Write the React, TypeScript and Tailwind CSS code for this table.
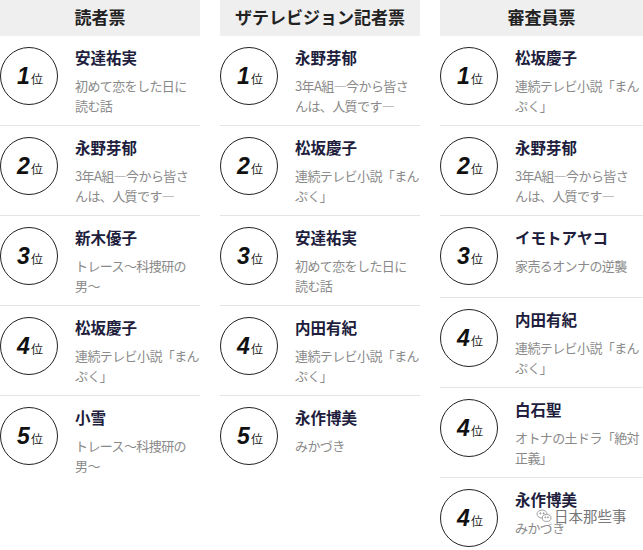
import React from "react";

type Entry = {
  rank: number;
  name: string;
  lines: string[];
};

const columns: { title: string; entries: Entry[] }[] = [
  {
    title: "読者票",
    entries: [
      { rank: 1, name: "安達祐実", lines: ["初めて恋をした日に", "読む話"] },
      { rank: 2, name: "永野芽郁", lines: ["3年A組―今から皆さ", "んは、人質です―"] },
      { rank: 3, name: "新木優子", lines: ["トレース〜科捜研の", "男〜"] },
      { rank: 4, name: "松坂慶子", lines: ["連続テレビ小説「まん", "ぷく」"] },
      { rank: 5, name: "小雪", lines: ["トレース〜科捜研の", "男〜"] },
    ],
  },
  {
    title: "ザテレビジョン記者票",
    entries: [
      { rank: 1, name: "永野芽郁", lines: ["3年A組―今から皆さ", "んは、人質です―"] },
      { rank: 2, name: "松坂慶子", lines: ["連続テレビ小説「まん", "ぷく」"] },
      { rank: 3, name: "安達祐実", lines: ["初めて恋をした日に", "読む話"] },
      { rank: 4, name: "内田有紀", lines: ["連続テレビ小説「まん", "ぷく」"] },
      { rank: 5, name: "永作博美", lines: ["みかづき"] },
    ],
  },
  {
    title: "審査員票",
    entries: [
      { rank: 1, name: "松坂慶子", lines: ["連続テレビ小説「まん", "ぷく」"] },
      { rank: 2, name: "永野芽郁", lines: ["3年A組―今から皆さ", "んは、人質です―"] },
      { rank: 3, name: "イモトアヤコ", lines: ["家売るオンナの逆襲"] },
      { rank: 4, name: "内田有紀", lines: ["連続テレビ小説「まん", "ぷく」"] },
      { rank: 4, name: "白石聖", lines: ["オトナの土ドラ「絶対", "正義」"] },
      { rank: 4, name: "永作博美", lines: ["みかづき"] },
    ],
  },
];

const Row: React.FC<{ entry: Entry }> = ({ entry }) => (
  <div className="flex pt-[11px] pb-[9px]">
    <div className="w-[75px] shrink-0 pb-[3px]">
      <div className="w-[58px] h-[58px] rounded-full border-[1.5px] border-[#222] flex items-center justify-center pl-[2px]">
        <span className="font-['Liberation_Sans',sans-serif] font-bold italic text-[23px] leading-none text-[#111]">
          {entry.rank}
        </span>
        <span className="text-[12px] leading-none text-[#222] mt-[5px] ml-[1px]">位</span>
      </div>
    </div>
    <div className="min-w-0">
      <div className="text-[15.5px] leading-[20px] font-bold text-[#211d3d] whitespace-nowrap">
        {entry.name}
      </div>
      <div className="mt-[9px] text-[13px] leading-[20px] tracking-[-0.6px] text-[#8a8a8a]">
        {entry.lines.map((line, i) => (
          <div key={i} className="whitespace-nowrap">
            {line}
          </div>
        ))}
      </div>
    </div>
  </div>
);

const App: React.FC = () => {
  return (
    <div className="relative w-[643px] h-[550px] overflow-hidden bg-white font-['Noto_Sans_CJK_JP','Noto_Sans',sans-serif]">
      <div className="flex gap-[20px]">
        {columns.map((col, idx) => (
          <div key={idx} className={idx === 2 ? "w-[203px] shrink-0" : "w-[200px] shrink-0"}>
            <div className="h-[36px] bg-[#efefef] flex items-center justify-center pb-[2px]">
              <h2 className="text-[17px] font-bold text-[#222]">{col.title}</h2>
            </div>
            <div className="divide-y divide-[#e4e4e4]">
              {col.entries.map((entry, i) => (
                <Row key={i} entry={entry} />
              ))}
            </div>
          </div>
        ))}
      </div>

      {/* watermark */}
      <div className="absolute left-[536px] top-[508px] flex items-center gap-[2px] bg-white/70">
        <svg width="16" height="16" viewBox="0 0 24 24" fill="none" stroke="#999" strokeWidth="1.4">
          <ellipse cx="9" cy="9" rx="7.5" ry="6" />
          <ellipse cx="16" cy="15" rx="6.5" ry="5.2" fill="white" />
          <circle cx="6.5" cy="8" r="0.9" fill="#999" />
          <circle cx="11.5" cy="8" r="0.9" fill="#999" />
          <circle cx="14" cy="14" r="0.8" fill="#999" />
          <circle cx="18" cy="14" r="0.8" fill="#999" />
        </svg>
        <span className="text-[14.5px] leading-none text-[#777] [text-shadow:0_0_2px_#fff]">日本那些事</span>
      </div>
    </div>
  );
};

export default App;
